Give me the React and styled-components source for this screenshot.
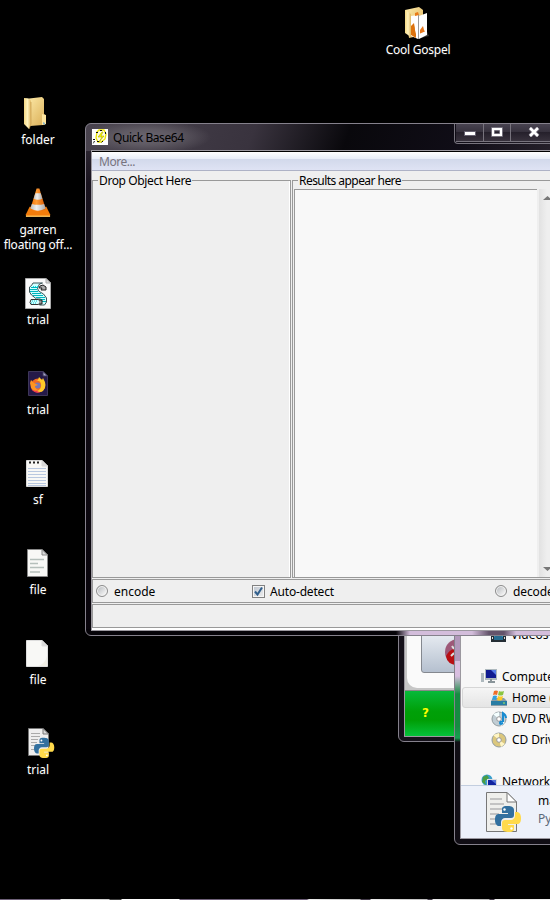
import React from 'react';
import styled, { createGlobalStyle } from 'styled-components';

const Global = createGlobalStyle`
  html, body { margin: 0; background: #000; overflow: hidden; }
  * { box-sizing: border-box; }
  body { font: 12px/15px "Noto Sans", "Open Sans", sans-serif; color: #000; }
  svg { display: block; flex: none; }
`;

const Desktop = styled.main`
  position: relative;
  width: 550px;
  height: 900px;
  overflow: hidden;
  background: #000;
`;

/* ---------- desktop shortcuts ---------- */
const Shortcut = styled.div`
  position: absolute;
  left: ${p => p.$x}px;
  top: ${p => p.$y}px;
  width: 76px;
  display: flex;
  flex-direction: column;
  align-items: center;
`;
const ShortcutIcon = styled.div`
  height: 37px;
  padding-bottom: 1px;
  margin-left: ${p => p.$nudge || 0}px;
  display: flex;
  align-items: center;
`;
const ShortcutLabel = styled.span`
  color: #fff;
  text-align: center;
  white-space: pre;
  letter-spacing: ${p => p.$track || 0}px;
  text-shadow: 0 1px 1px #222;
`;

/* ---------- window chrome ---------- */
const Frame = styled.section`
  position: absolute;
  left: ${p => p.$x}px;
  top: ${p => p.$y}px;
  width: ${p => p.$w}px;
  height: ${p => p.$h}px;
  border: 1px solid #85818c;
  border-radius: 6px;
  padding: ${p => p.$pad};
  display: flex;
  flex-direction: column;
  background: ${p => p.$bg};
  overflow: hidden;
`;
const Client = styled.div`
  flex: 1;
  min-height: 0;
  border: 1px solid #9b989f;
  display: flex;
  flex-direction: column;
  background: ${p => p.$bg || '#f7f7f7'};
  overflow: hidden;
`;
const TitleBar = styled.header`
  height: 26px;
  flex: none;
  display: flex;
  justify-content: space-between;
`;
const Title = styled.div`
  display: flex;
  align-items: center;
  gap: 5px;
  padding-left: 1px;
  width: 160px;
  white-space: nowrap;
  letter-spacing: -0.45px;
  background: radial-gradient(ellipse 66px 17px at 54px 13px, #6a6570 0, #5f5a63 45%, transparent 100%);
`;
const Controls = styled.div`
  display: flex;
  width: 130px;
  height: 20px;
  margin-right: 5px;
  border: solid #77737d;
  border-width: 0 1px 1px;
  border-radius: 0 0 4px 4px;
  padding: 0 1px 1px;
`;
const Control = styled.div`
  width: ${p => p.$w}px;
  display: flex;
  justify-content: center;
  align-items: center;
  padding-bottom: 1px;
  border: solid #77737d;
  border-width: 0 1px 1px 0;
  background: linear-gradient(#484350, #37323e 45%, #241f2a 46%, #38323d);
`;

/* ---------- Quick Base64 ---------- */
const MenuBar = styled.nav`
  height: 20px;
  flex: none;
  padding: 2px 7px 0;
  color: #77747f;
  letter-spacing: -0.45px;
  border-top: 1px solid #000;
  border-bottom: 1px solid #aeb2c6;
  background: linear-gradient(#fff, #e8edf8 38%, #d2d9eb 40%, #dfe3f4);
`;
const Panels = styled.div`
  height: 408px;
  flex: none;
  display: flex;
  gap: 1px;
  padding: 1px 0 0 0;
`;
const Group = styled.fieldset`
  flex: none;
  width: ${p => p.$w}px;
  margin: 0;
  min-width: 0;
  height: 406px;
  padding: 0;
  border: 1px solid #999;
  box-shadow: inset -1px 0 #fff;
`;
const Legend = styled.legend`
  margin-left: 5px;
  padding: 0 1px;
  height: 17px;
  line-height: 18px;
  white-space: nowrap;
  letter-spacing: ${p => p.$track || 0}px;
`;
const Results = styled.div`
  height: 388px;
  margin-left: 1px;
  display: flex;
`;
const Output = styled.div`
  width: 243px;
  border: solid #999;
  border-width: 1px 0 0 1px;
  background: #f8f8f8;
`;
const Scroll = styled.div`
  width: 20px;
  padding: 6px 0 5px 4px;
  margin-left: 2px;
  display: flex;
  flex-direction: column;
  justify-content: space-between;
  background: linear-gradient(90deg, #e2e2e2, #efefef 8px);
`;
const Options = styled.div`
  height: 24px;
  flex: none;
  border: 1px solid #999;
  display: grid;
  grid-template-columns: 156px 243px 120px;
  align-items: center;
  padding-left: 3px;
  margin-bottom: 1px;
`;
const Option = styled.label`
  display: flex;
  align-items: center;
  gap: ${p => p.$gap}px;
  letter-spacing: ${p => p.$track || 0}px;
`;
const Radio = styled.span`
  width: 12px;
  height: 12px;
  border: 1px solid #8c8c8c;
  border-radius: 50%;
  box-shadow: inset 0 0 0 1px #f4f4f4;
  background: linear-gradient(135deg, #b2b6bb, #eee 75%);
`;
const Check = styled.span`
  width: 13px;
  height: 13px;
  border: 1px solid #818181;
  box-shadow: inset 0 0 0 1px #f5f5f5;
  background: linear-gradient(135deg, #bdc5cf, #eee);
`;
const Status = styled.div`
  height: 24px;
  flex: none;
  border: 1px solid #999;
  box-shadow: 0 2px #fff;
`;

/* ---------- background windows ---------- */
const Card = styled.div`
  height: 86px;
  flex: none;
  background: #c6c6c6;
  padding-left: 2px;
  padding-bottom: 2px;
`;
const CardBody = styled.div`
  height: 84px;
  background: #fafafa;
  border-radius: 0 0 0 10px;
  padding-left: 14px;
`;
const BigButton = styled.div`
  width: 80px;
  height: 69px;
  border: 1px solid #84888f;
  border-radius: 0 0 3px 3px;
  background: linear-gradient(#e5eaf0 45%, #b5c0cf);
  display: flex;
  align-items: flex-end;
  padding: 0 0 6px 22px;
`;
const Green = styled.div`
  flex: 1;
  padding: 15px 0 0 17px;
  color: #ff0;
  font: bold 12px/15px "DejaVu Sans", sans-serif;
  border-top: 1px solid #888;
  background: linear-gradient(#07b93a, #00a008 45%, #009e05 65%, #05c13b);
`;
const Tree = styled.div`
  height: 181px;
  flex: none;
  overflow: hidden;
  padding-top: 20px;
`;
const TreeRow = styled.div`
  height: 21px;
  margin: 0 0 ${p => p.$after || 0}px 1px;
  padding-left: ${p => (p.$child ? 28 : 18)}px;
  display: flex;
  align-items: center;
  gap: 5px;
  white-space: nowrap;
  letter-spacing: ${p => p.$track || 0}px;
  border: 1px solid ${p => (p.$active ? '#d6d6d6' : 'transparent')};
  border-radius: 3px;
  background: ${p => (p.$active ? 'linear-gradient(#f5f5f5, #e5e5e5)' : 'none')};
`;
const Details = styled.footer`
  flex: 1;
  display: flex;
  gap: 15px;
  padding: 6px 0 0 25px;
  background: #edf1fa;
  border-top: 1px solid #c3cedf;
`;
const FileInfo = styled.div`
  display: flex;
  flex-direction: column;
  gap: 3px;
  padding-top: 1px;
  white-space: nowrap;
`;
const Kind = styled.span`
  color: #5a6779;
`;
const TaskbarEdge = styled.div`
  position: absolute;
  left: 0;
  top: 899px;
  width: 550px;
  height: 1px;
  background: linear-gradient(90deg,
    #6e6078 0 60px, #eee 61px, #ccc 109px, #444 110px 121px, #fff 122px 179px,
    #6e6078 180px 307px, #eee 309px, #bbb 360px, #443c4a 361px 370px, #eee 371px, #bbb 427px,
    #443c4a 428px 432px, #eee 433px, #bbb 489px, #443c4a 490px 494px, #eee 495px);
`;

/* ---------- drawings ---------- */
const FolderIcon = ({ full }) => (
  <svg width="28" height="36" viewBox="0 0 28 36">
    <defs>
      <linearGradient id="fb" x2="1" y2="1"><stop stopColor="#ffedac" /><stop offset="1" stopColor="#d9ad55" /></linearGradient>
      <linearGradient id="ff"><stop stopColor="#f4d783" /><stop offset=".5" stopColor="#fff3bd" /><stop offset="1" stopColor="#dfb662" /></linearGradient>
    </defs>
    {full ? (
      <g>
        <path d="M22 20l5 11-8 2z" fill="#303030" />
        <path d="M3 5l14-3 4 3v25l-14 3z" fill="url(#fb)" />
        <path d="M9 11l7-1v24l-7-3z" fill="#fff" /><path d="M9 21l3-3 2 8v7l-5-3z" fill="#dd730e" />
        <path d="M13 8l3-1 1 3-4 1z" fill="#e97b18" />
        <path d="M12 12l3-1v22l-2-8z" fill="#fff" />
        <path d="M17 11l8-3v22l-8 4z" fill="#fff" /><path d="M18 25l3-4 1 4 2 3-6 3z" fill="#e8781d" />
        <path d="M17 29l7-3v3l-7 4z" fill="#fff" />
        <path d="M3 5l6 4v23l-6-4z" fill="url(#ff)" />
        <path d="M16.500 10v24" stroke="#999" />
      </g>
    ) : (
      <g>
        <path d="M3 4l17-2 2 2v15l2 2v8l-3 1-13 1z" fill="url(#fb)" />
        <path d="M20 19l4 1v9l-4 1z" fill="#ffe6a0" /><path d="M21 27l2 1v2l-2-1z" fill="#8cb7cb" />
        <path d="M2 3q7 0 7 4v22l-2 5-5-5z" fill="url(#ff)" />
        <path d="M9 7v22l-2 5" fill="none" stroke="#c79c4c" strokeWidth=".7" />
      </g>
    )}
  </svg>
);
const ConeIcon = () => (
  <svg width="26" height="30" viewBox="0 3 28 32">
    <defs>
      <linearGradient id="co"><stop stopColor="#ef6c00" /><stop offset=".4" stopColor="#ff9b34" /><stop offset="1" stopColor="#d45500" /></linearGradient>
      <linearGradient id="cw"><stop stopColor="#bbb" /><stop offset=".4" stopColor="#eee" /><stop offset="1" stopColor="#aaa" /></linearGradient>
    </defs>
    <path d="M5 23h18l4 8v2H1v-2z" fill="#f27c0b" /><path d="M1 32.500h26V34H1z" fill="#ffc45c" />
    <path d="M12.500 3.500h3l6.800 22q-8.300 5-16.600 0z" fill="url(#co)" />
    <path d="M11.200 8.500h5.700l1.800 6q-4.700 2-9.400 0z" fill="url(#cw)" />
    <path d="M7.400 20q6.600 2 13.200 0l1.600 5q-8.200 4.600-16.400 0z" fill="url(#cw)" />
  </svg>
);
const Page = ({ children, w = 22, h = 28, fill = '#f8f8f6', edge = '#999', corner = '#d9d9d9', fold = 6 }) => (
  <g>
    <path d={`M.5.5H${w - fold}L${w - .5} ${fold}V${h - .5}H.5z`} fill={fill} stroke={edge} />
    <path d={`M${w - fold} .5V${fold}H${w - .5}z`} fill={corner} stroke={edge} />
    {children}
  </g>
);
const ScriptIcon = () => (
  <svg width="26" height="31" viewBox="0 0 26 31">
    <Page w={26} h={31} edge="#aaa" fill="#fafafa" fold={5} />
    <path d="M6.500 7.500L4.500 9v5l2 3 5 4h4l1 4-2 2h5l2-3v-4l-3-4-5-3-1-3 2-4 3-1H8z" fill="#d0ffff" stroke="#3d5559" />
    <path d="M6 9.500h7M5 11.500h7M5 13.500h8M7 15.500h9M8 17.500h10M11 19.500h9M15 21.500h5M16 23.500h5" stroke="#00b3bc" />
    <path d="M8 8.500h6" stroke="#00e5ee" strokeDasharray="1 1" />
    <path d="M14 10l1-2 3-1 3 2v3h-5l1-2z" fill="#aaa" stroke="#222" />
    <path d="M6 21.500h7l2 1v3l-2 1H6l-1-2z" fill="#d6ffff" stroke="#333" />
    <path d="M7 23h6M6 25h6" stroke="#00c4ce" strokeDasharray="1 1" />
    <path d="M14 22h3v4h-3" fill="#999" stroke="#222" />
  </svg>
);
const FirefoxIcon = () => (
  <svg width="20" height="25" viewBox="0 0 20 25">
    <Page w={20} h={25} fill="#251948" edge="#3d3658" corner="#a9a9cc" fold={5} />
    <circle cx="10" cy="14.500" r="7" fill="#f36b22" />
    <path d="M3 18q7 8 14-1l-3 1q-6 3-11 0z" fill="#ef3753" />
    <path d="M10 9l1-3 3 3 1-2q5 8 0 13-3 2-6 0 5-2 4-7-1-4-5-3z" fill="#ffc929" />
    <circle cx="9.500" cy="14.500" r="3" fill="#7778b5" />
    <path d="M2 12l1-3 3 3 4 2-3 1q0 3 4 4-6 2-8-2z" fill="#ff9520" />
  </svg>
);
const NoteIcon = () => (
  <svg width="22" height="27" viewBox="0 0 22 27">
    <Page w={22} h={27} edge="#d8d8d8" />
    <path d="M2 8.500h18M2 11.500h18M2 14.500h18M2 17.500h18M2 20.500h18M2 23.500h18M2 25.500h18" stroke="#b9c8e0" />
    <path d="M3 2.500h2M7 2.500h2M11 2.500h2" stroke="#222" strokeWidth="2" />
  </svg>
);
const TextIcon = () => (
  <svg width="22" height="28" viewBox="0 0 22 28">
    <Page w={21} h={28} edge="#888" />
    <path d="M3 10.500h14M3 14.500h8M3 18.500h14M3 23h10" stroke="#b5bfbb" strokeWidth="1.700" />
  </svg>
);
const BlankIcon = () => (
  <svg width="22" height="27" viewBox="0 0 22 27">
    <Page w={22} h={27} edge="#ddd" />
    <path d="M21 16v10H12q7-2 9-10" fill="#efeee5" />
  </svg>
);
const Snakes = () => (
  <g>
    <path d="M12 1c-5 0-5 2-5 4v3h6v1H4c-3 0-4 2-4 6s2 6 4 6h2v-4c0-2 2-4 4-4h6c2 0 3-1 3-3V5c0-3-3-4-7-4z" fill="#32709f" />
    <circle cx="9.500" cy="4.500" r="1.200" fill="#fff" />
    <path d="M14 27c5 0 5-2 5-4v-3h-6v-1h9c3 0 4-2 4-6s-2-6-4-6h-2v4c0 2-2 4-4 4h-6c-2 0-3 1-3 3v5c0 3 3 4 7 4z" fill="#ffda4b" />
    <circle cx="16.500" cy="23.500" r="1.200" fill="#fff" />
  </g>
);
const PythonIcon = ({ big }) => (
  <svg width={big ? 37 : 28} height={big ? 42 : 31} viewBox={big ? '0 0 37 42' : '0 0 28 31'}>
    {big ? (
      <g>
        <Page w={31} h={40} edge="#777" fill="#efefec" corner="#fff" fold={10}>
          <path d="M4 7h12M4 12h14M4 17h14M4 22h9M4 27h6M4 32h6" stroke="#b5b5b5" strokeWidth="1.500" />
        </Page>
        <g transform="translate(9 13)"><Snakes /></g>
      </g>
    ) : (
      <g>
        <Page w={21} h={28} edge="#777" fill="#eee">
          <path d="M3 5.500h9M3 8.500h9M3 11.500h7M3 14.500h6M3 17.500h4M3 21.500h4" stroke="#aaa" />
        </Page>
        <g transform="translate(6 9) scale(.78)"><Snakes /></g>
      </g>
    )}
  </svg>
);
const AppIcon = () => (
  <svg width="16" height="16" viewBox="0 0 16 16">
    <path fill="#fff" d="M0 0h16v16H0z" />
    <path d="M5 3l2-2h5l2 4-1 5-4 3H6L4 9z" fill="#fffde8" stroke="#ece400" strokeWidth="1.300" />
    <path d="M10 3L6 8h4l-3 5 5-6H9l2-4z" fill="#ff0" stroke="#ada900" strokeWidth=".6" />
    <path d="M4 3.500h2M8 1.500h3M13.500 3v3M1 10.500h2M5 12.500h2M2.500 12l-1.500 3M11 12l-2 2" stroke="#111" strokeDasharray="2 1" />
  </svg>
);
const CheckMark = () => (
  <svg width="11" height="11" viewBox="0 0 11 11"><path d="M2 5.500L4.500 8.500 9 1.500" fill="none" stroke="#315f8c" strokeWidth="2" /></svg>
);
const Arrow = ({ down }) => (
  <svg width="10" height="6" viewBox="0 0 10 6"><path d={down ? 'M0 1h9L4.500 5z' : 'M0 5h9L4.500 1z'} fill="#777" /></svg>
);
const Minimize = () => (
  <svg width="12" height="7" viewBox="0 0 12 7"><path d="M.5 2.500h11v4H.5z" fill="#fff" stroke="#666170" /></svg>
);
const Maximize = () => (
  <svg width="12" height="10" viewBox="0 0 12 10"><path fill="#fff" fillRule="evenodd" stroke="#666170" strokeWidth=".7" d="M.5.5h11v9H.5zm3 3v3h5v-3z" /></svg>
);
const Close = () => (
  <svg width="12" height="10" viewBox="0 0 12 10"><path d="M2 1l8 8M10 1L2 9" stroke="#77717f" strokeWidth="4" /><path d="M2 1l8 8M10 1L2 9" stroke="#fff" strokeWidth="2.500" /></svg>
);
const RedBadge = () => (
  <svg width="28" height="28" viewBox="0 0 28 28">
    <circle cx="14" cy="14" r="13" fill="#9d5878" /><path d="M2 18q3-6 8-7l4 3v13Q3 27 2 18" fill="#b80e13" />
    <path d="M8 8l2 3M10 15l-3 3" stroke="#ddd" strokeWidth="2" />
  </svg>
);
const VideoIcon = () => (
  <svg width="15" height="14" viewBox="0 0 15 14"><path fill="#252e35" d="M0 0h15v14H0z" /><path fill="#3e9bcb" d="M3 1h9v11H3z" /><path d="M1.500 1v12M13.500 1v12" stroke="#ddd" strokeDasharray="2 2" /><path d="M3 9l4-3 5 3v3H3z" fill="#276c90" /></svg>
);
const ComputerIcon = () => (
  <svg width="16" height="15" viewBox="0 0 16 15"><path fill="#aeb9be" d="M0 4h3v9H0zM4 0h12v11H4z" /><path fill="#101b91" d="M5 1h10v8H5z" /><path fill="#567be8" d="M10 1h5v5z" /><path d="M7 13h7M10 10v3" stroke="#899499" strokeWidth="2" /></svg>
);
const DriveIcon = () => (
  <svg width="16" height="16" viewBox="0 0 16 16"><path d="M0 11l2-3h11l3 3v5H0z" fill="#8b9da5" /><path d="M0 11h16v4H0z" fill="#287da4" /><path d="M3 1q2-1 4 0L6 5q-2-1-4 0z" fill="#ef6d29" /><path d="M8 1q2 1 5 0l-1 4q-3 1-5 0z" fill="#8bc53f" /><path d="M2 6q2-1 4 0l-1 4q-2-1-4 0z" fill="#30a0df" /><path d="M7 6q2 1 5 0l-1 4q-3 1-5 0z" fill="#ffc924" /><path d="M12 13h2" stroke="#9ef25b" /></svg>
);
const DiscIcon = ({ gold }) => (
  <svg width="16" height="16" viewBox="0 0 16 16"><circle cx="8" cy="8" r="7" fill={gold ? '#dbc77d' : '#c1cdd4'} stroke="#929ca0" /><path d="M8 8L2 3l6-2zM8 8l6 4-4 3z" fill={gold ? '#fff5c4' : '#f5ffff'} /><circle cx="8" cy="8" r="2.300" fill="#fff" stroke="#999" />{!gold && <path d="M12 11V2q3 2 3 5M12 11q-3-1-3 1t3 0" fill="none" stroke="#188bd0" strokeWidth="2" />}</svg>
);
const NetworkIcon = () => (
  <svg width="16" height="15" viewBox="0 0 16 15"><circle cx="6" cy="6" r="5.500" fill="#3b9fcd" /><path d="M2 3l4-2 2 3-4 3 1 4-4-3z" fill="#4b9e43" /><path d="M6 5h10v8H6z" fill="#ddd" /><path d="M7 6h8v6H7z" fill="#1023a0" /><path d="M10 6h5v4z" fill="#5473d8" /></svg>
);

const shortcuts = [
  { x: 380, y: 5, label: 'Cool Gospel', track: -0.25, nudge: -4, icon: <FolderIcon full /> },
  { x: 0, y: 95, label: 'folder', nudge: -5, icon: <FolderIcon /> },
  { x: 0, y: 185, label: 'garren\nfloating off...', track: -0.2, icon: <ConeIcon /> },
  { x: 0, y: 275, label: 'trial', icon: <ScriptIcon /> },
  { x: 0, y: 365, label: 'trial', icon: <FirefoxIcon /> },
  { x: 0, y: 455, label: 'sf', nudge: -2, icon: <NoteIcon /> },
  { x: 0, y: 545, label: 'file', nudge: 0, icon: <TextIcon /> },
  { x: 0, y: 635, label: 'file', nudge: -2, icon: <BlankIcon /> },
  { x: 0, y: 725, label: 'trial', nudge: 8, icon: <PythonIcon /> },
];

export default function App() {
  return (
    <Desktop>
      <Global />
      {shortcuts.map((s, i) => (
        <Shortcut key={i} $x={s.x} $y={s.y}>
          <ShortcutIcon $nudge={s.nudge}>{s.icon}</ShortcutIcon>
          <ShortcutLabel $track={s.track}>{s.label}</ShortcutLabel>
        </Shortcut>
      ))}

      <Frame $x={398} $y={590} $w={150} $h={152} $pad="12px 5px 4px" $bg="#15111a">
        <Client $bg="#05b32c">
          <Card><CardBody><BigButton><RedBadge /></BigButton></CardBody></Card>
          <Green>?</Green>
        </Client>
      </Frame>

      <Frame $x={454} $y={590} $w={150} $h={255} $pad="12px 5px 5px"
        $bg="linear-gradient(90deg, #b298bb 0, #b298bb 100%) 0 0/5px 70px no-repeat, linear-gradient(#d8bee0 0 85px, #168b41 103px 135px, #16a050 147px, #100d14 151px)">
        <Client>
          <Tree>
            <TreeRow $child $after={21}><VideoIcon />Videos</TreeRow>
            <TreeRow><ComputerIcon />Computer</TreeRow>
            <TreeRow $child $active><DriveIcon />Home (C:)</TreeRow>
            <TreeRow $child $track={-0.3}><DiscIcon />DVD RW Drive</TreeRow>
            <TreeRow $child $after={21} $track={-0.1}><DiscIcon gold />CD Drive</TreeRow>
            <TreeRow><NetworkIcon />Network</TreeRow>
          </Tree>
          <Details>
            <PythonIcon big />
            <FileInfo><span>main</span><Kind>Python File</Kind></FileInfo>
          </Details>
        </Client>
      </Frame>

      <Frame $x={85} $y={123} $w={510} $h={513} $pad="0 5px 4px"
        $bg="linear-gradient(90deg, #050308 0 310px, #d3bddb 324px 386px, #64546b 403px 418px, #d3bddb 430px) 0 100%/100% 6px no-repeat, linear-gradient(110deg, #49434e 0, #39333e 160px, #09080c 250px, #100d17 360px, #29232d 460px) 0 0/100% 27px no-repeat, linear-gradient(#39333e, #18121d 60px, #09050c 450px)">
        <TitleBar>
          <Title><AppIcon />Quick Base64</Title>
          <Controls>
            <Control $w={28}><Minimize /></Control>
            <Control $w={27}><Maximize /></Control>
            <Control $w={47}><Close /></Control>
          </Controls>
        </TitleBar>
        <Client $bg="#efefef">
          <MenuBar>More...</MenuBar>
          <Panels>
            <Group $w={199}><Legend $track={-0.38}>Drop Object Here</Legend></Group>
            <Group $w={300}>
              <Legend $track={-0.55}>Results appear here</Legend>
              <Results><Output /><Scroll><Arrow /><Arrow down /></Scroll></Results>
            </Group>
          </Panels>
          <Options>
            <Option $gap={6}><Radio />encode</Option>
            <Option $gap={5} $track={-0.18}><Check><CheckMark /></Check>Auto-detect</Option>
            <Option $gap={6} $track={-0.1}><Radio />decode</Option>
          </Options>
          <Status />
        </Client>
      </Frame>
      <TaskbarEdge />
    </Desktop>
  );
}
